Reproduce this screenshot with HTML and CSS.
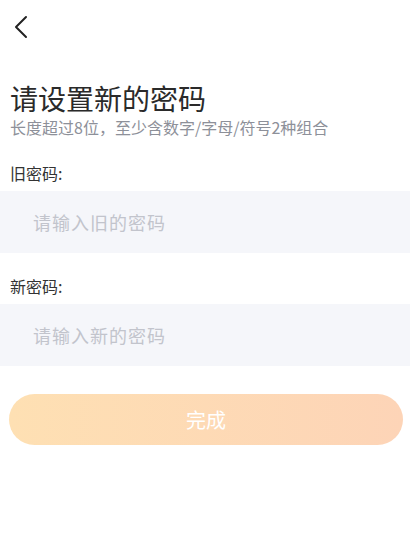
FILE: index.html
```html
<!DOCTYPE html>
<html lang="zh">
<head>
<meta charset="utf-8">
<link rel="stylesheet" href="styles.css">
</head>
<body>
<div class="page">
  <div class="nav">
    <svg class="back" width="16" height="24" viewBox="0 0 16 24"><path d="M13 2 L3 12 L13 22" fill="none" stroke="#222" stroke-width="2" stroke-linecap="round" stroke-linejoin="round"/></svg>
  </div>
  <h1 class="title">请设置新的密码</h1>
  <p class="sub">长度超过8位，至少含数字/字母/符号2种组合</p>
  <div class="field">
    <div class="label">旧密码:</div>
    <div class="input">请输入旧的密码</div>
  </div>
  <div class="field">
    <div class="label">新密码:</div>
    <div class="input">请输入新的密码</div>
  </div>
  <div class="btnwrap"><div class="btn">完成</div></div>
</div>
</body>
</html>
```
FILE: styles.css
```css
* { box-sizing: border-box; }
html, body { margin: 0; padding: 0; background: #fff; }
body { font-family: "Noto Sans CJK SC", "Noto Sans", sans-serif; color: #333; }
.page { width: 410px; }
.nav { height: 54px; padding: 15px 0 0 13px; }
.back { display: block; }
.title { margin: 28px 0 0 10px; font-size: 28px; font-weight: 400; line-height: 32px; color: #2a2a2a; }
.sub { margin: 3px 0 0 10px; font-size: 16px; line-height: 20px; color: #8d9099; }
.field { margin-top: 25px; }
.field + .field { margin-top: 22px; }
.label { padding-left: 10px; font-size: 16px; line-height: 22px; color: #333; }
.input { margin-top: 7px; height: 62px; background: #f5f6fa; padding-left: 33px; display: flex; align-items: center; font-size: 18px; letter-spacing: 1px; color: #c2c4cc; }
.btnwrap { padding: 28px 7px 0 9px; }
.btn { height: 51px; border-radius: 26px; background: linear-gradient(90deg, #fee0b3, #fdd4b7); color: #fff; font-size: 20px; display: flex; align-items: center; justify-content: center; }
```
